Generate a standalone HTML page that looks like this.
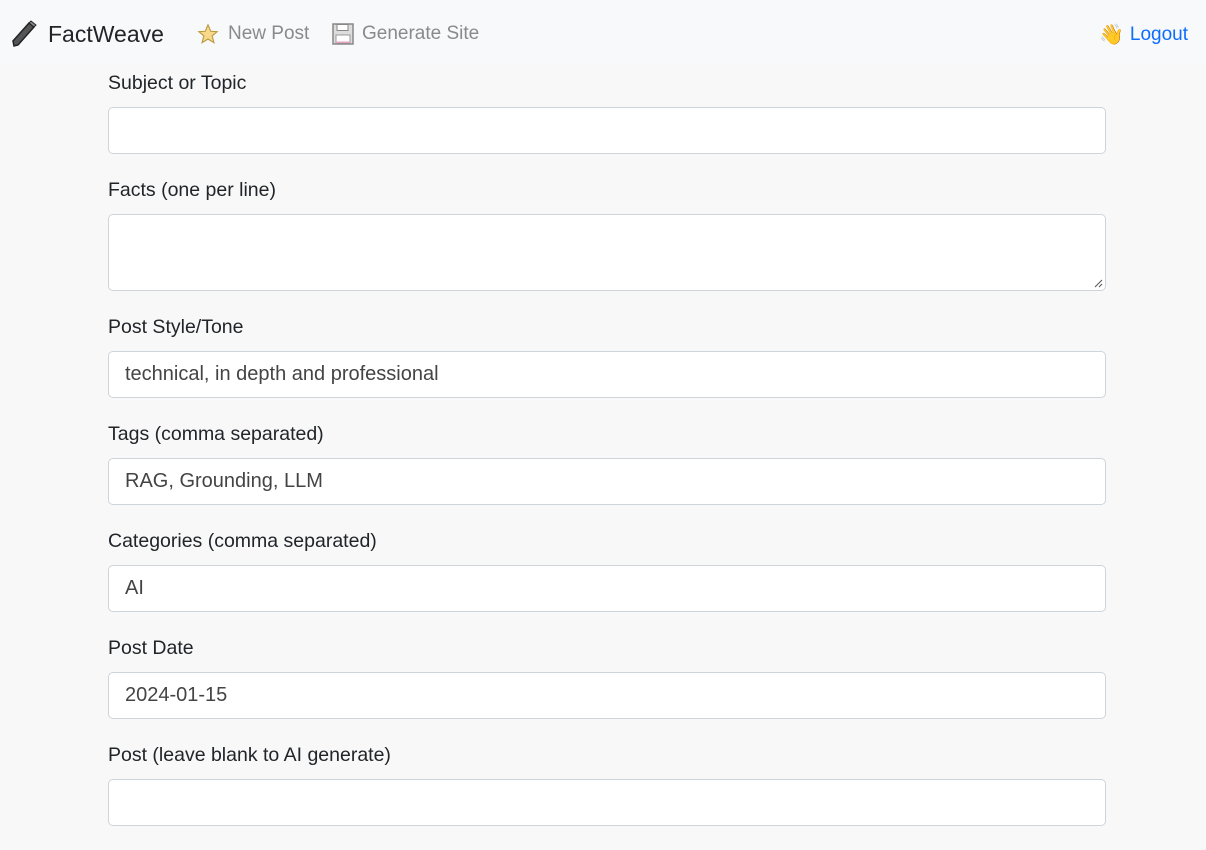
<!DOCTYPE html>
<html><head><style>
body{margin:0;background:#f8f8f8;font-family:"Liberation Sans",sans-serif;color:#212529;width:1206px;height:781px;overflow:hidden}
.nav{height:64px;background:#f8f9fa;position:relative}
.brand{position:absolute;left:10px;top:19px;font-size:23px;color:#212529;display:flex;align-items:center}
.brand svg{margin-right:10px}
.link{position:absolute;top:23px;font-size:19px;color:#8a8a8a;display:flex;align-items:center}
.link svg{margin-right:8px}
.logout{position:absolute;right:18px;top:22px;font-size:19px;color:#0d6efd;display:flex;align-items:center}
.form{position:absolute;left:108px;top:71px;width:998px}
label{display:block;height:24px;line-height:24px;font-size:19.5px;margin-bottom:12px}
.in{box-sizing:border-box;height:47px;border:1px solid #ced4da;border-radius:5px;background:#fff;margin-bottom:24px;padding:0 16px;line-height:45px;font-size:20px;color:#444}
.ta{height:77px;position:relative}
</style></head><body>
<div class="nav">
<div class="brand"><svg width="28" height="30" viewBox="0 0 28 30"><path d="M4 27 L3 22 L19 4 L24 8 L8 26 Z" fill="#555" stroke="#222" stroke-width="1.5"/><path d="M19 4 L21 2 L26 6 L24 8Z" fill="#888" stroke="#222"/></svg>FactWeave</div>
<div class="link" style="left:196px"><svg width="24" height="22" viewBox="0 0 24 24"><path d="M12 2 L15 9 L22 9.5 L16.5 14 L18.5 21.5 L12 17.5 L5.5 21.5 L7.5 14 L2 9.5 L9 9 Z" fill="#f8d98a" stroke="#b89840" stroke-width="1.2"/></svg>New Post</div>
<div class="link" style="left:332px"><svg width="22" height="22" viewBox="0 0 22 22"><rect x="1" y="1" width="20" height="20" fill="#ddd" stroke="#888" stroke-width="1.5"/><rect x="5" y="1.5" width="11" height="6" fill="#fff" stroke="#888"/><rect x="4" y="12" width="14" height="8" fill="#fff" stroke="#999"/><rect x="4" y="18.5" width="14" height="1.5" fill="#e8a0c0"/></svg>Generate Site</div>
<div class="logout"><span style="font-size:20px;margin-right:6px">👋</span>Logout</div>
</div>
<div class="form">
<label>Subject or Topic</label><div class="in"></div>
<label>Facts (one per line)</label><div class="in ta"><svg style="position:absolute;right:2px;bottom:2px" width="10" height="10"><path d="M9 2 L2 9 M9 6 L6 9" stroke="#555" stroke-width="1"/></svg></div>
<label>Post Style/Tone</label><div class="in">technical, in depth and professional</div>
<label>Tags (comma separated)</label><div class="in">RAG, Grounding, LLM</div>
<label>Categories (comma separated)</label><div class="in">AI</div>
<label>Post Date</label><div class="in">2024-01-15</div>
<label>Post (leave blank to AI generate)</label><div class="in"></div>
</div>
</body></html>
